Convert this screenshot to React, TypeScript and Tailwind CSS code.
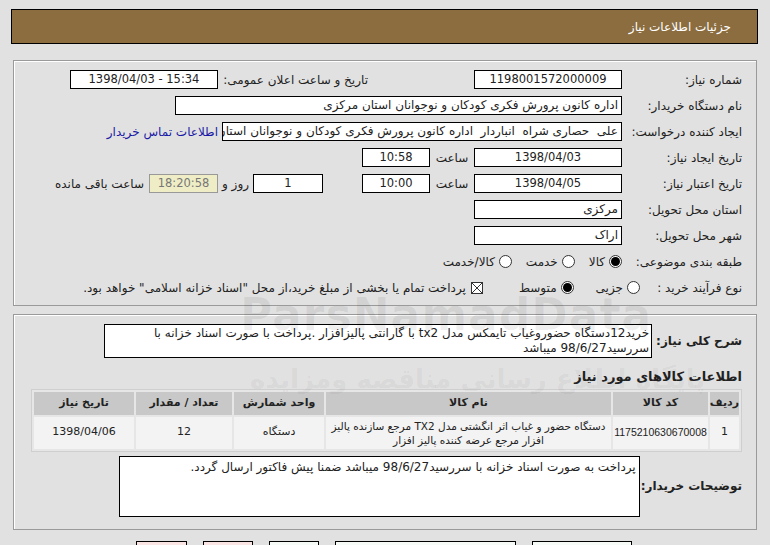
import React from 'react';

const font = { fontFamily: '"DejaVu Sans", Tahoma, sans-serif' };

function Box({ w, children, align = 'center', num, className = '' }: { w: string; children?: React.ReactNode; align?: 'center' | 'right'; num?: boolean; className?: string }) {
  return (
    <div
      dir={num ? 'ltr' : undefined}
      className={`${w} h-[19px] shrink-0 border border-black bg-white leading-[17px] text-[#222] whitespace-nowrap overflow-hidden ${
        num ? 'text-[11.5px]' : 'text-[12px]'
      } ${align === 'center' ? 'text-center' : 'text-right pr-[3px]'} ${className}`}
    >
      {children}
    </div>
  );
}

function Label({ children, w = 'w-[120px]' }: { children: React.ReactNode; w?: string }) {
  return <div className={`${w} shrink-0 text-[12px] text-[#222] whitespace-nowrap`}>{children}</div>;
}

function Radio({ checked, label }: { checked?: boolean; label: string }) {
  return (
    <div className="flex items-center gap-[4px] shrink-0">
      <span className="w-[13px] h-[13px] rounded-full border border-[#333] bg-white flex items-center justify-center">
        {checked && <span className="w-[9px] h-[9px] rounded-full bg-black" />}
      </span>
      <span className="text-[12px] text-[#222]">{label}</span>
    </div>
  );
}

export default function App() {
  const cols = ['ردیف', 'کد کالا', 'نام کالا', 'واحد شمارش', 'تعداد / مقدار', 'تاریخ نیاز'];
  const widths = ['w-[29px]', 'w-[95px]', 'w-[285px]', 'w-[90px]', 'w-[96px]', 'w-[100px]'];

  return (
    <div dir="rtl" className="relative w-[770px] h-[545px] overflow-hidden bg-[#e1e1e1]" style={font}>
      {/* Header */}
      <div className="mt-[9px] ml-[11px] mr-[12px] h-[35px] bg-[#8b6d40] border border-black flex items-center pr-[26px]">
        <span className="text-white text-[12px]">جزئیات اطلاعات نیاز</span>
      </div>

      {/* Main info */}
      <div className="mt-[16px] ml-[13px] mr-[13px] h-[246px] border border-[#9a9a9a] shadow-[inset_1px_1px_0_#fff] pr-[14px] pt-[9px] flex flex-col gap-[7px]">
        <div className="flex items-center h-[19px]">
          <Label>شماره نیاز:</Label>
          <Box w="w-[148px]" num>1198001572000009</Box>
          <div className="w-[106px] shrink-0" />
          <Label w="w-[150px]">تاریخ و ساعت اعلان عمومی:</Label>
          <Box w="w-[148px]" num>1398/04/03 - 15:34</Box>
        </div>

        <div className="flex items-center h-[19px]">
          <Label>نام دستگاه خریدار:</Label>
          <Box w="w-[447px]" align="right">اداره کانون پرورش فکری کودکان و نوجوانان استان مرکزی</Box>
        </div>

        <div className="flex items-center h-[19px]">
          <Label>ایجاد کننده درخواست:</Label>
          <Box w="w-[400px]" align="right">علی&nbsp; حصاری شراه&nbsp; انباردار&nbsp; اداره کانون پرورش فکری کودکان و نوجوانان استان مرکزی</Box>
          <a className="mr-[4px] text-[12px] text-[#1a1aa6] whitespace-nowrap">اطلاعات تماس خریدار</a>
        </div>

        <div className="flex items-center h-[19px]">
          <Label>تاریخ ایجاد نیاز:</Label>
          <Box w="w-[148px]" num>1398/04/03</Box>
          <div className="w-[44px] shrink-0 text-center text-[12px] text-[#222]">ساعت</div>
          <Box w="w-[68px]" num>10:58</Box>
        </div>

        <div className="flex items-center h-[19px]">
          <Label>تاریخ اعتبار نیاز:</Label>
          <Box w="w-[148px]" num>1398/04/05</Box>
          <div className="w-[44px] shrink-0 text-center text-[12px] text-[#222]">ساعت</div>
          <Box w="w-[68px]" num>10:00</Box>
          <div className="w-[39px] shrink-0" />
          <Box w="w-[70px]" num>1</Box>
          <div className="w-[35px] shrink-0 text-center text-[12px] text-[#222]">روز و</div>
          <Box w="w-[69px]" num className="!bg-[#efedc6] !text-[#777] !border-[#999]">18:20:58</Box>
          <div className="mr-[5px] text-[12px] text-[#222] whitespace-nowrap">ساعت باقی مانده</div>
        </div>

        <div className="flex items-center h-[19px]">
          <Label>استان محل تحویل:</Label>
          <Box w="w-[148px]" align="right">مرکزی</Box>
        </div>

        <div className="flex items-center h-[19px]">
          <Label>شهر محل تحویل:</Label>
          <Box w="w-[148px]" align="right">اراک</Box>
        </div>

        <div className="flex items-center h-[19px]">
          <Label>طبقه بندی موضوعی:</Label>
          <div className="flex items-center gap-[14px]">
            <Radio checked label="کالا" />
            <Radio label="خدمت" />
            <Radio label="کالا/خدمت" />
          </div>
        </div>

        <div className="flex items-center h-[19px]">
          <Label w="w-[102px]">نوع فرآیند خرید :</Label>
          <div className="flex items-center gap-[22px]">
            <Radio label="جزیی" />
            <Radio checked label="متوسط" />
            <div className="flex items-center gap-[5px] mr-[14px]">
              <svg width="12" height="12" viewBox="0 0 12 12" className="shrink-0">
                <rect x="0.5" y="0.5" width="11" height="11" fill="#fff" stroke="#333" />
                <path d="M1 1L11 11M11 1L1 11" stroke="#333" strokeWidth="1" />
              </svg>
              <span className="text-[12px] text-[#222] whitespace-nowrap">
                پرداخت تمام یا بخشی از مبلغ خرید،از محل "اسناد خزانه اسلامی" خواهد بود.
              </span>
            </div>
          </div>
        </div>
      </div>

      {/* Description + items */}
      <div className="mt-[8px] ml-[13px] mr-[13px] h-[216px] border border-[#9a9a9a] shadow-[inset_1px_1px_0_#fff] pr-[14px] pt-[9px] flex flex-col">
        <div className="flex items-center gap-[4px]">
          <div className="shrink-0 text-[12px] font-bold text-[#222] whitespace-nowrap">شرح کلی نیاز:</div>
          <div className="w-[548px] shrink-0 h-[34px] border border-black bg-white text-[12px] leading-[15px] text-[#222] pr-[2px] pt-[1px] overflow-hidden">
            خرید12دستگاه حضوروغیاب تایمکس مدل tx2 با گارانتی پالیزافزار .پرداخت با صورت اسناد خزانه با
            <br />
            سررسید98/6/27 میباشد
          </div>
        </div>

        <div className="mt-[9px] text-[13px] font-bold text-[#222]">اطلاعات کالاهای مورد نیاز</div>

        <table className="mt-[2px] w-[711px] table-fixed border-separate border-spacing-[2px] bg-[#e6e6e6] border border-[#cfcfcf]">
          <thead>
            <tr>
              {cols.map((c, i) => (
                <th key={c} className={`${widths[i]} h-[23px] p-0 bg-[#c8c8c8] text-[11px] font-bold text-[#222] text-center`}>
                  {c}
                </th>
              ))}
            </tr>
          </thead>
          <tbody>
            <tr className="text-[11px] text-[#222]">
              <td className="h-[32px] p-0 bg-[#f3f3f3] text-center">1</td>
              <td className="p-0 bg-[#f3f3f3] text-center" style={{ fontFamily: '"Liberation Sans", Arial, sans-serif', fontSize: '10.5px' }}>
                1175210630670008
              </td>
              <td className="p-0 bg-[#f3f3f3] text-center text-[10.5px] leading-[14px] whitespace-nowrap">
                دستگاه حضور و غیاب اثر انگشتی مدل TX2 مرجع سازنده پالیز
                <br />
                افزار مرجع عرضه کننده پالیز افزار
              </td>
              <td className="p-0 bg-[#f3f3f3] text-center">دستگاه</td>
              <td className="p-0 bg-[#f3f3f3] text-center">12</td>
              <td className="p-0 bg-[#f3f3f3] text-center">1398/04/06</td>
            </tr>
          </tbody>
        </table>

        <div className="mt-[4px] flex items-center gap-[1px]">
          <div className="shrink-0 text-[12px] font-bold text-[#222] whitespace-nowrap">توضیحات خریدار:</div>
          <div className="w-[521px] shrink-0 h-[61px] border border-black bg-white text-[12px] leading-[15px] text-[#222] pr-[3px] pt-[3px]">
            پرداخت به صورت اسناد خزانه با سررسید98/6/27 میباشد ضمنا پیش فاکتور ارسال گردد.
          </div>
        </div>
      </div>

      {/* Bottom buttons (cut off) */}
      <div className="mt-[11px] mr-[138px] flex gap-[16px]">
        <div className="w-[100px] h-[20px] border border-black bg-[#f7fbf7]" />
        <div className="w-[181px] h-[20px] border border-black bg-[#f7fbf7]" />
        <div className="w-[50px] h-[20px] border border-black bg-[#f7fbf7]" />
        <div className="w-[50px] h-[20px] border border-black bg-[#fbe4e4]" />
        <div className="w-[51px] h-[20px] border border-black bg-[#fbe4e4]" />
      </div>

      {/* Watermark */}
      <div
        dir="ltr"
        className="pointer-events-none absolute left-[240px] top-[282px] text-[44px] font-bold tracking-[1px] text-black/[0.06]"
      >
        ParsNamadData
      </div>
      <div className="pointer-events-none absolute left-[250px] top-[360px] text-[26px] font-bold text-black/[0.05]">
        پایگاه اطلاع رسانی مناقصه ومزایده
      </div>
    </div>
  );
}
